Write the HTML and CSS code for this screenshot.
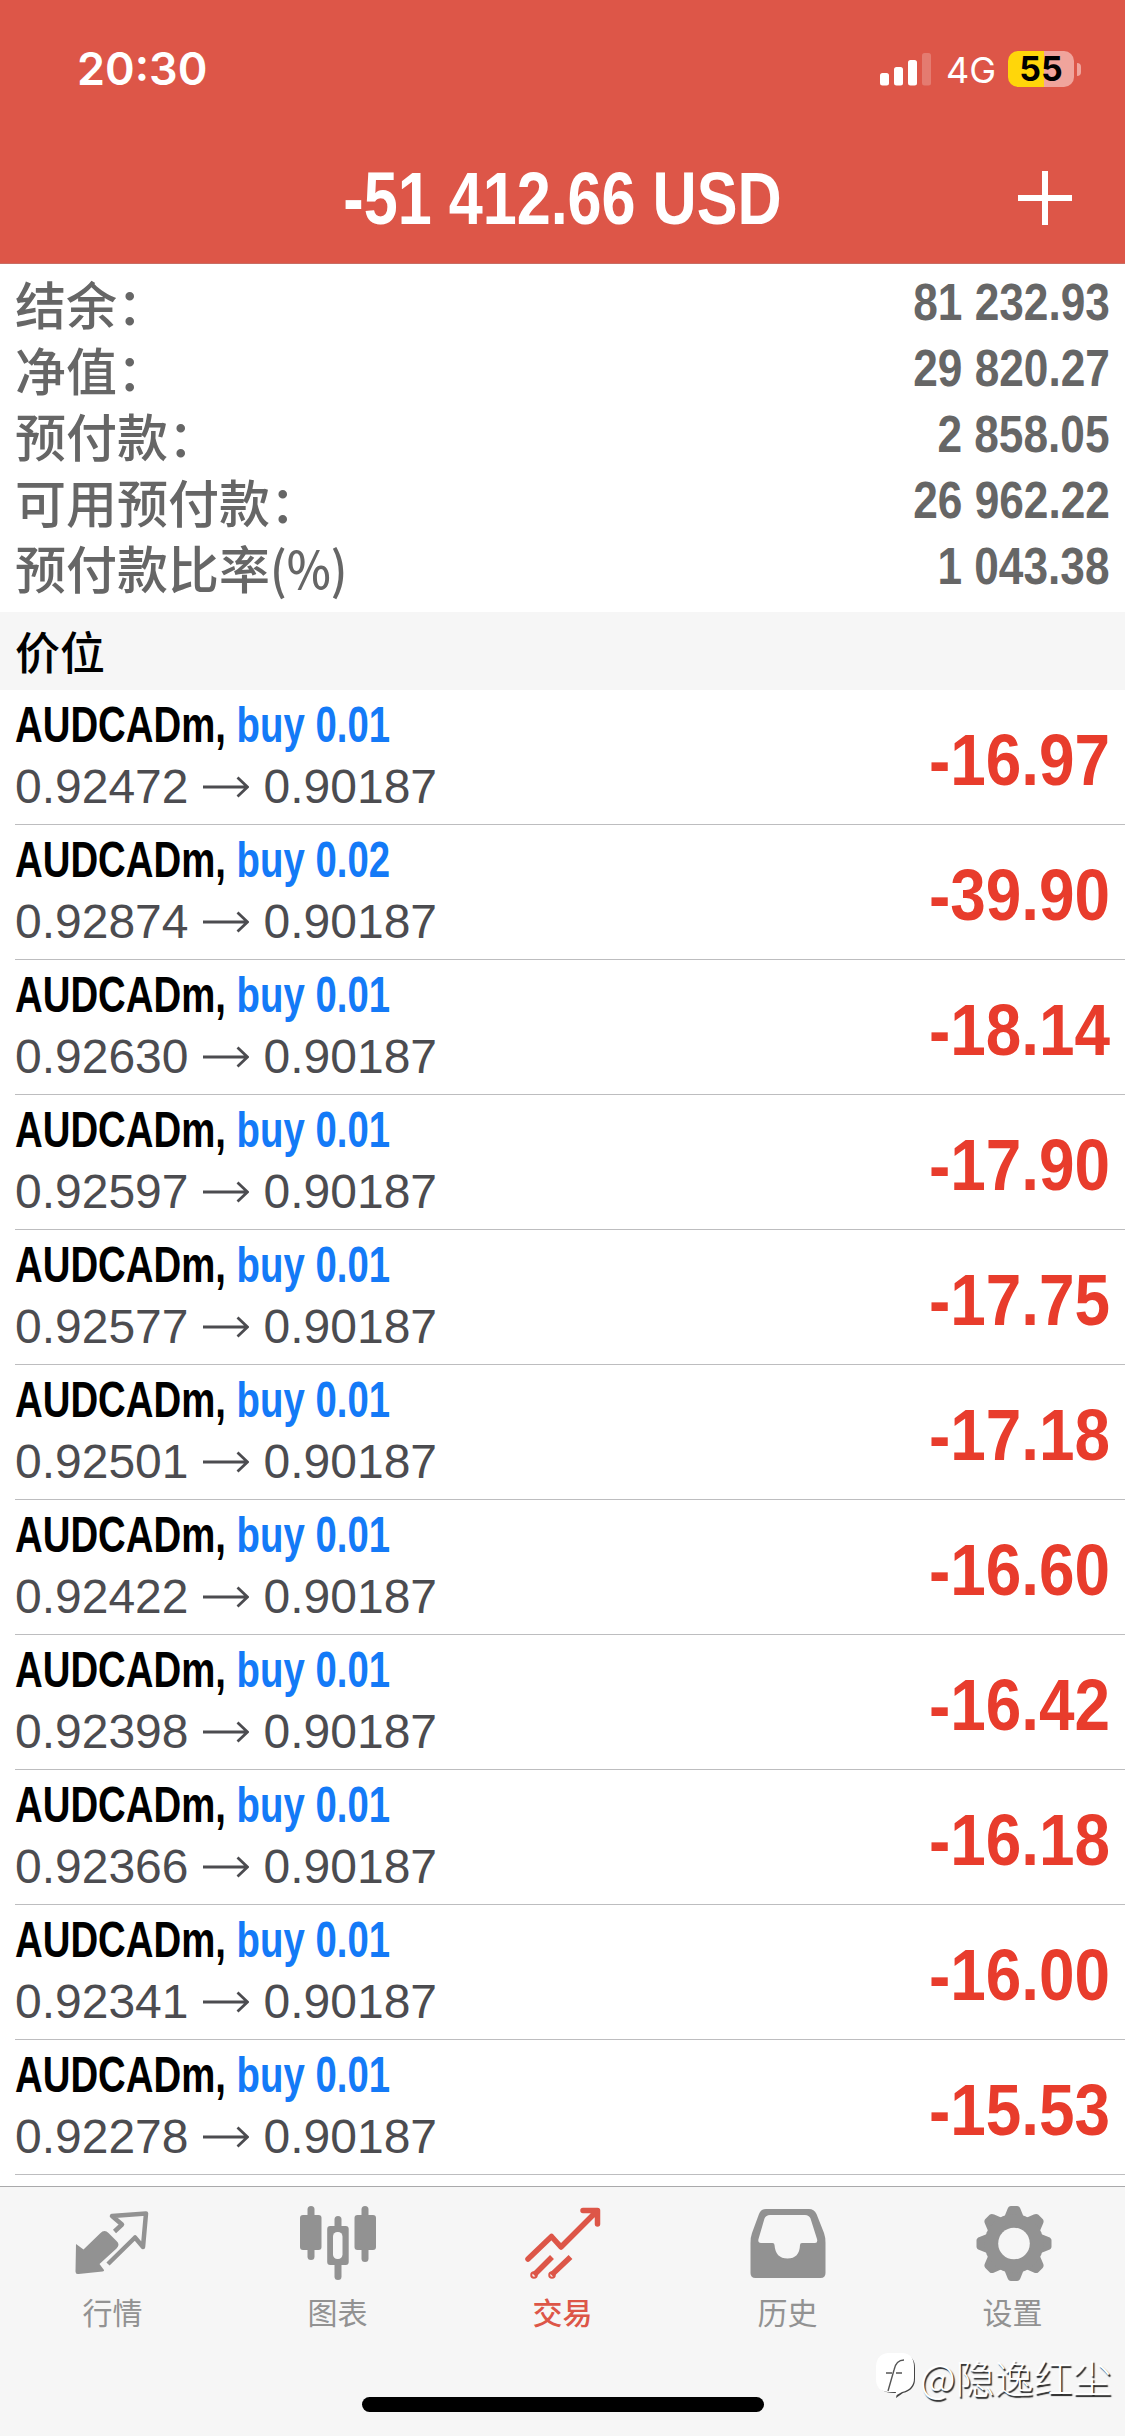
FILE: index.html
```html
<!DOCTYPE html>
<html lang="zh-CN">
<head>
<meta charset="utf-8">
<title>交易</title>
<link rel="stylesheet" href="styles.css">
</head>
<body>
<svg class="defs" width="0" height="0" aria-hidden="true">
  <symbol id="arrow" viewBox="0 0 46 24"><path d="M0 12H44M34.500 2.500L44.500 12L34.500 21.500" fill="none" stroke="currentColor" stroke-width="2.800"/></symbol>
</svg>
<header class="header">
  <div class="status">
    <span class="time">20:30</span>
    <div class="status-right">
      <svg class="signal" width="52" height="34" viewBox="0 0 52 34" fill="#fff"><rect x="0" y="21" width="9" height="12.500" rx="2.500"/><rect x="14" y="15" width="9" height="18.500" rx="2.500"/><rect x="28" y="8" width="9" height="25.500" rx="2.500"/><rect x="42" y="1" width="9" height="32.500" rx="2.500" opacity=".22"/></svg>
      <span class="network">4G</span>
      <div class="battery">55</div>
      <div class="battery-cap"></div>
    </div>
  </div>
  <div class="titlebar">
    <h1 class="title">-51 412.66 USD</h1>
    <svg class="plus" width="54" height="54" viewBox="0 0 54 54"><path d="M0 27H54M27 0V54" stroke="#fff" stroke-width="6"/></svg>
  </div>
</header>
<section class="summary">
  <div class="sum-row"><span class="label">结余：</span><span class="value">81 232.93</span></div>
  <div class="sum-row"><span class="label">净值：</span><span class="value">29 820.27</span></div>
  <div class="sum-row"><span class="label">预付款：</span><span class="value">2 858.05</span></div>
  <div class="sum-row"><span class="label">可用预付款：</span><span class="value">26 962.22</span></div>
  <div class="sum-row"><span class="label">预付款比率<span class="percent">(%)</span></span><span class="value">1 043.38</span></div>
</section>
<h2 class="section">价位</h2>
<main class="list">
  <div class="row"><div class="info"><div class="name">AUDCADm, <span class="side">buy 0.01</span></div><div class="price">0.92472<svg class="arrow"><use href="#arrow"/></svg>0.90187</div></div><div class="profit">-16.97</div></div>
  <div class="row"><div class="info"><div class="name">AUDCADm, <span class="side">buy 0.02</span></div><div class="price">0.92874<svg class="arrow"><use href="#arrow"/></svg>0.90187</div></div><div class="profit">-39.90</div></div>
  <div class="row"><div class="info"><div class="name">AUDCADm, <span class="side">buy 0.01</span></div><div class="price">0.92630<svg class="arrow"><use href="#arrow"/></svg>0.90187</div></div><div class="profit">-18.14</div></div>
  <div class="row"><div class="info"><div class="name">AUDCADm, <span class="side">buy 0.01</span></div><div class="price">0.92597<svg class="arrow"><use href="#arrow"/></svg>0.90187</div></div><div class="profit">-17.90</div></div>
  <div class="row"><div class="info"><div class="name">AUDCADm, <span class="side">buy 0.01</span></div><div class="price">0.92577<svg class="arrow"><use href="#arrow"/></svg>0.90187</div></div><div class="profit">-17.75</div></div>
  <div class="row"><div class="info"><div class="name">AUDCADm, <span class="side">buy 0.01</span></div><div class="price">0.92501<svg class="arrow"><use href="#arrow"/></svg>0.90187</div></div><div class="profit">-17.18</div></div>
  <div class="row"><div class="info"><div class="name">AUDCADm, <span class="side">buy 0.01</span></div><div class="price">0.92422<svg class="arrow"><use href="#arrow"/></svg>0.90187</div></div><div class="profit">-16.60</div></div>
  <div class="row"><div class="info"><div class="name">AUDCADm, <span class="side">buy 0.01</span></div><div class="price">0.92398<svg class="arrow"><use href="#arrow"/></svg>0.90187</div></div><div class="profit">-16.42</div></div>
  <div class="row"><div class="info"><div class="name">AUDCADm, <span class="side">buy 0.01</span></div><div class="price">0.92366<svg class="arrow"><use href="#arrow"/></svg>0.90187</div></div><div class="profit">-16.18</div></div>
  <div class="row"><div class="info"><div class="name">AUDCADm, <span class="side">buy 0.01</span></div><div class="price">0.92341<svg class="arrow"><use href="#arrow"/></svg>0.90187</div></div><div class="profit">-16.00</div></div>
  <div class="row"><div class="info"><div class="name">AUDCADm, <span class="side">buy 0.01</span></div><div class="price">0.92278<svg class="arrow"><use href="#arrow"/></svg>0.90187</div></div><div class="profit">-15.53</div></div>
</main>
<footer class="footer">
  <nav class="tabs">
    <a class="tab"><svg class="icon" viewBox="0 0 80 80"><path d="M0.500 38L8 43.500L24.500 27.500Q29 23 33 27L41 35Q45 38.500 41 42.500L24 58L28.500 64Q29 65 27 65.500L3 68Q0 68.500 0 65.500Z" transform="translate(2.500,-1)" fill="currentColor"/><path d="M41.500 24.500L49 17.500L39 9L73 6.500L70 40L62 30.500L35 57" fill="none" stroke="currentColor" stroke-width="4.500" stroke-linejoin="round"/></svg><span>行情</span></a>
    <a class="tab"><svg class="icon" viewBox="0 0 80 80" fill="currentColor"><rect x="9.500" y="-1" width="7" height="54" rx="3.500"/><rect x="2" y="8" width="21.500" height="35" rx="3"/><rect x="36.500" y="9" width="7" height="64" rx="3.500"/><rect x="29.200" y="19" width="21.500" height="39" rx="3"/><rect x="35" y="25" width="9.500" height="27" rx="4.500" fill="#f6f6f6"/><rect x="63.500" y="-1" width="7" height="56" rx="3.500"/><rect x="56.500" y="8" width="21.500" height="35" rx="3"/></svg><span>图表</span></a>
    <a class="tab active"><svg class="icon" viewBox="0 0 80 80" fill="none" stroke="currentColor" stroke-width="5.500" stroke-linecap="round" stroke-linejoin="round"><path d="M5 52L28.500 29.500L38 40L74 4M60 3.500H74.500V17"/><path d="M11 68L29 50M28.500 68L47.500 50" stroke-linecap="butt"/><circle cx="11" cy="68" r="1"/><circle cx="29" cy="68" r="1"/></svg><span>交易</span></a>
    <a class="tab"><svg class="icon" viewBox="0 0 80 80"><path fill="currentColor" fill-rule="evenodd" d="M18 2H61Q66 2 68.500 7L76 26Q77.500 30 77.500 36V66Q77.500 71 72.500 71H7.500Q2.500 71 2.500 66V36Q2.500 30 4 26L11 7Q13 2 18 2ZM22 8Q18 8 16.500 11.500L10.500 32Q9.500 36 13 36H24.500Q26.500 36 26.500 38Q27.500 51.500 39.500 51.500Q51.500 51.500 52 38Q52 36 54 36H67Q70 36 69 32L62.500 11.500Q61 8 57 8Z"/></svg><span>历史</span></a>
    <a class="tab"><svg class="icon" viewBox="0 0 80 80"><g fill="currentColor" transform="translate(41 36.500)"><path id="teeth" d="M-9.500 -27L-6.500 -34.500Q-5.500 -37.500 -3 -37.500H3Q5.500 -37.500 6.500 -34.500L9.500 -27V27L6.500 34.500Q5.500 37.500 3 37.500H-3Q-5.500 37.500 -6.500 34.500L-9.500 27Z"/><use href="#teeth" transform="rotate(45)"/><use href="#teeth" transform="rotate(90)"/><use href="#teeth" transform="rotate(135)"/><circle r="29.500"/><circle r="15.800" fill="#f6f6f6"/></g></svg><span>设置</span></a>
  </nav>
  <div class="home"></div>
  <div class="watermark">
    <svg width="42" height="46" viewBox="0 0 42 46"><path d="M12 2H28Q39 3 39 15V26Q39 37 27 40L20 45L21 40Q2 41 1 27V14Q2 3 12 2Z" fill="#444"/><path d="M12 0H27Q38 1 38 14V25Q38 36 26 39L19 43L20 39H12Q0 38 0 26V13Q1 1 12 0Z" fill="#fff"/><path d="M12 38L18 17Q20 7 28 7M10 20H16M20 20H26" fill="none" stroke="#555" stroke-width="1.400"/></svg>
    <span>@隐逸红尘</span>
  </div>
</footer>
</body>
</html>
```
FILE: styles.css
```css
* { box-sizing: border-box; }
body {
  margin: 0;
  width: 1125px;
  height: 2436px;
  overflow: hidden;
  background: #fff;
  display: flex;
  flex-direction: column;
  font-family: "Liberation Sans", "Noto Sans CJK SC", sans-serif;
}
.defs { position: absolute; }

.header { height: 264px; background: #dd5648; color: #fff; border-bottom: 1px solid #c96d63; flex: none; }
.status { height: 138px; padding: 0 44px 0 77px; display: flex; align-items: center; justify-content: space-between; }
.time { font: 600 45px/50px Inter, sans-serif; }
.status-right { display: flex; align-items: center; }
.signal { margin-right: 14px; }
.network { font: 400 36px/40px Inter, sans-serif; width: 62px; padding-top: 2px; white-space: nowrap; }
.battery {
  width: 66px;
  height: 36px;
  border-radius: 10px;
  background: linear-gradient(90deg, #ffd60a 54%, #f0a49c 54%);
  color: #000;
  font: 700 34px/36px Inter, sans-serif;
  text-align: center;
}
.battery-cap { width: 4px; height: 13px; margin-left: 3px; border-radius: 0 5px 5px 0; background: #f0a49c; }
.titlebar { height: 120px; padding: 0 53px; display: grid; grid-template-columns: 54px 1fr 54px; align-items: center; }
.title {
  grid-column: 2;
  margin: 0;
  font-size: 75px;
  line-height: 84px;
  text-align: center;
  white-space: nowrap;
  transform: scaleX(.815);
}

.summary { height: 348px; padding: 6px 15px 0; color: #666; flex: none; }
.sum-row { height: 66px; display: flex; justify-content: space-between; align-items: center; }
.label { font: 500 51px/66px "Noto Sans CJK SC", sans-serif; }
.percent { display: inline-block; transform: scaleX(.92); transform-origin: left; }
.value { font-size: 51px; font-weight: 700; line-height: 66px; transform: scaleX(.867); transform-origin: right; }

.section { margin: 0; height: 78px; padding-left: 15px; background: #f6f6f6; font: 500 45px/78px "Noto Sans CJK SC", sans-serif; flex: none; }

.list { flex: none; padding-left: 15px; }
.row { height: 135px; padding-right: 15px; border-bottom: 1px solid #bdbdbf; display: flex; justify-content: space-between; }
.info { padding-top: 6px; white-space: nowrap; }
.name { font-size: 50px; font-weight: 700; line-height: 58px; transform: scaleX(.767); transform-origin: left; width: 300px; color: #000; }
.side { color: #147af7; }
.price { height: 58px; display: flex; align-items: center; padding-top: 8px; font-size: 48px; line-height: 54px; color: #4c4c50; }
.arrow { width: 46px; height: 24px; margin: 0 15px 0 14px; }
.profit { padding-top: 28px; font-size: 73px; line-height: 84px; font-weight: 700; color: #e83c2c; transform: scaleX(.875); transform-origin: right; }

.footer { position: relative; margin-top: 11px; flex: 1; background: #f6f6f6; border-top: 1px solid #a9a9ab; display: flex; flex-direction: column; align-items: center; }
.tabs { width: 1125px; height: 210px; padding-top: 20px; display: flex; }
.tab { flex: 1; display: flex; flex-direction: column; align-items: center; color: #929292; font: 400 30px/40px "Noto Sans CJK SC", sans-serif; }
.active { color: #dd5648; font-weight: 500; }
.icon { width: 80px; height: 80px; overflow: visible; margin-bottom: 4px; }
.home { width: 402px; height: 15px; border-radius: 8px; background: #000; }
.watermark {
  position: absolute;
  left: 876px;
  top: 166px;
  display: flex;
  align-items: center;
  gap: 2px;
  color: #fff;
  font: 300 39px/44px "Noto Sans CJK SC", sans-serif;
  text-shadow: 1.500px 1.500px 1px #222;
  white-space: nowrap;
}
```
